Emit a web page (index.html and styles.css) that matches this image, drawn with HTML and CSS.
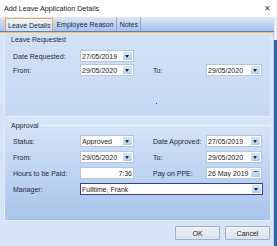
FILE: index.html
```html
<!DOCTYPE html>
<html lang="en">
<head>
    <meta charset="UTF-8">
    <title>Add Leave Application Details</title>
    <link rel="stylesheet" href="styles.css">
</head>
<body>
    <div class="window">
        <div class="titlebar">
            <span class="title">Add Leave Application Details</span>
            <span class="close">&#x2715;</span>
        </div>
        <div class="tabs">
            <div class="tab active">Leave Details</div>
            <div class="tab">Employee Reason</div>
            <div class="tab">Notes</div>
        </div>
        <div class="page">
            <!-- Leave requested -->
            <div class="group requested">
                <div class="group-title">Leave Requested</div>
                <div class="rows tight">
                    <div class="row">
                        <label>Date Requested:</label>
                        <div class="field combo"><span>27/05/2019</span><i class="drop"></i></div>
                    </div>
                    <div class="row">
                        <label>From:</label>
                        <div class="field combo"><span>29/05/2020</span><i class="drop"></i></div>
                        <label class="second">To:</label>
                        <div class="field combo wide"><span>29/05/2020</span><i class="drop"></i></div>
                    </div>
                </div>
                <div class="dot"></div>
            </div>

            <!-- Approval -->
            <div class="group approval">
                <div class="group-title">Approval<span class="rule"></span></div>
                <div class="rows">
                    <div class="row">
                        <label>Status:</label>
                        <div class="field combo"><span>Approved</span><i class="drop"></i></div>
                        <label class="second">Date Approved:</label>
                        <div class="field combo wide"><span>27/05/2019</span><i class="drop"></i></div>
                    </div>
                    <div class="row">
                        <label>From:</label>
                        <div class="field combo"><span>29/05/2020</span><i class="drop"></i></div>
                        <label class="second">To:</label>
                        <div class="field combo wide"><span>29/05/2020</span><i class="drop"></i></div>
                    </div>
                    <div class="row">
                        <label>Hours to be Paid:</label>
                        <div class="field num"><span>7:36</span></div>
                        <label class="second">Pay on PPE:</label>
                        <div class="field combo wide"><span>26 May 2019</span><i class="more">&middot;&middot;&middot;</i></div>
                    </div>
                    <div class="row">
                        <label>Manager:</label>
                        <div class="field combo full focus"><span>Fulltime, Frank</span><i class="drop"></i></div>
                    </div>
                </div>
            </div>

            <div class="buttons">
                <button>OK</button>
                <button>Cancel</button>
            </div>
        </div>
    </div>
    <div class="edge"></div>
</body>
</html>
```

FILE: styles.css
```css
body {
    margin: 0;
    width: 277px;
    height: 246px;
    overflow: hidden;
    display: flex;
    background: #e9eff8;
    font-family: 'Liberation Sans', Arial, sans-serif;
    font-size: 7px;
    color: #1b1b1b;
}
.window {
    width: 274px;
    display: flex;
    flex-direction: column;
}
.edge {
    width: 3px;
    margin-top: 40px;
    background: #2f62ad;
}
.titlebar {
    height: 17px;
    background: #fff;
    display: flex;
    align-items: center;
    justify-content: space-between;
    padding: 0 6px 0 4px;
    width: 277px;
    box-sizing: border-box;
}
.title {
    font-size: 7.2px;
    color: #222;
}
.close {
    font-size: 8px;
    color: #444;
}
.tabs {
    height: 14px;
    display: flex;
    align-items: flex-end;
    padding-left: 5px;
    background: linear-gradient(#dbe7f7, #a6c2e9);
    border-bottom: 1px solid #5b7fc1;
    box-shadow: 0 1px 0 #f3c069;
}
.tab {
    height: 13px;
    line-height: 13px;
    padding: 0 2px;
    margin-right: 1px;
    border-right: 1px solid #8fa9cf;
    color: #1c2a44;
    font-size: 7px;
}
.tab.active {
    border: 1px solid #e9a94a;
    border-bottom: none;
    height: 12px;
    background: linear-gradient(#f1f6fd, #c9dcf4);
}
.page {
    flex: 1;
    margin-top: 1px;
    background: #d5e4f7;
    display: flex;
    flex-direction: column;
    padding: 1px 2px 0 4px;
    border-right: 1px solid #c3d4ec;
}
.group {
    position: relative;
    border: 1px solid #e3ecf9;
    border-top: none;
}
.requested {
    height: 82px;
    background: linear-gradient(#d2e2f6, #c5d9f3);
}
.approval {
    margin-top: 3px;
    height: 100px;
    background: linear-gradient(#d6e5f8, #a9c5eb);
}
.group-title {
    display: flex;
    align-items: center;
    height: 11px;
    padding-left: 6px;
    color: #1f2a3d;
}
.approval .group-title {
    height: 10px;
}
.rule {
    flex: 1;
    height: 1px;
    margin-left: 2px;
    background: #eef4fc;
}
.rows {
    display: flex;
    flex-direction: column;
    gap: 4px;
    padding: 5px 0 0 8px;
}
.rows.tight {
    gap: 2px;
}
.row {
    display: flex;
    align-items: center;
    height: 12px;
}
.row label {
    width: 67px;
    color: #1f2838;
}
.row label.second {
    width: 53px;
    margin-left: 19px;
}
.field {
    width: 54px;
    height: 12px;
    box-sizing: border-box;
    border: 1px solid #b5c6dd;
    background: #fff;
    display: flex;
    align-items: center;
    padding-left: 1px;
    font-size: 7px;
}
.field span {
    flex: 1;
    white-space: nowrap;
    overflow: hidden;
}
.field.wide {
    width: 56px;
}
.field.full {
    width: 183px;
}
.field.focus {
    border-color: #3d3f8e;
}
.field.num span {
    text-align: right;
    padding-right: 1px;
}
.drop, .more {
    width: 9px;
    height: 8px;
    margin-right: 1px;
    background: linear-gradient(#d8e6f8, #b4cdee);
    position: relative;
    font-style: normal;
}
.drop::after {
    content: '';
    position: absolute;
    left: 2px;
    top: 3px;
    border-left: 2.5px solid transparent;
    border-right: 2.5px solid transparent;
    border-top: 3px solid #1e2a40;
}
.more {
    font-size: 7px;
    line-height: 6px;
    text-align: center;
    color: #1e2a40;
    font-weight: bold;
    letter-spacing: -1px;
}
.dot {
    position: absolute;
    left: 151px;
    top: 69px;
    width: 1px;
    height: 1px;
    background: #3344cc;
}
.buttons {
    display: flex;
    justify-content: flex-end;
    gap: 5px;
    padding: 5px 1px 0 0;
}
.buttons button {
    width: 45px;
    height: 14px;
    padding: 0;
    font-family: inherit;
    font-size: 7px;
    color: #222;
    background: linear-gradient(#eef1f5, #dde3eb);
    border: 1px solid #a5afbf;
    border-radius: 1px;
}
```
